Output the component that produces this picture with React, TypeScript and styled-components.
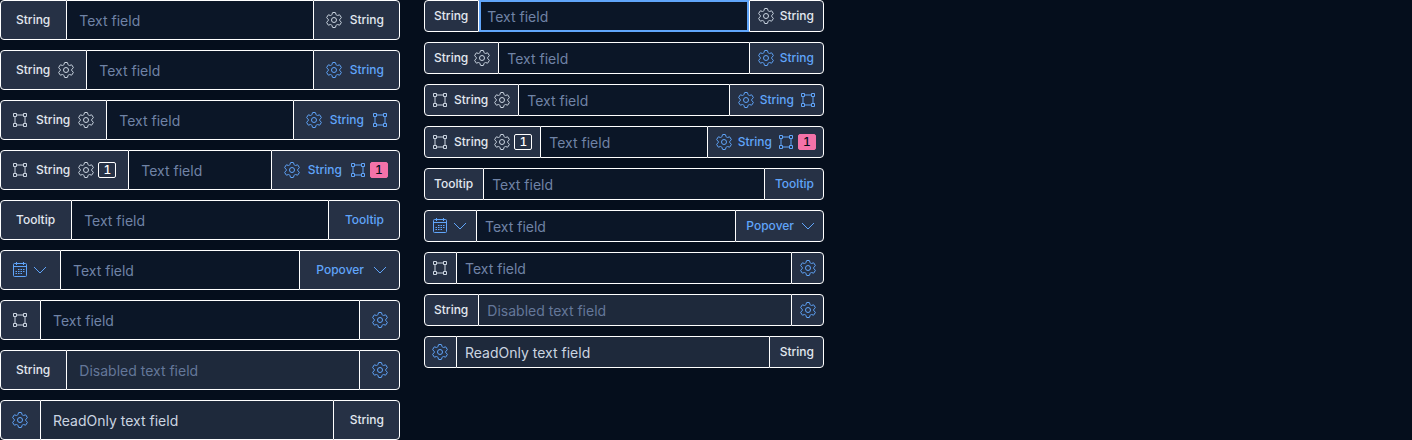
import React from 'react';
import styled, { createGlobalStyle, css } from 'styled-components';

const GlobalStyle = createGlobalStyle`
  *, *::before, *::after { box-sizing: border-box; }
  body {
    margin: 0;
    background: #050e1c;
    color: #e2e8f0;
    font-family: Inter, "Liberation Sans", sans-serif;
  }
`;

type Size = 'medium' | 'small';
type Item = 'frame' | 'gear' | 'calendar' | 'chevron' | 'badge' | { text: string };

interface AddonData {
  items: Item[];
  action?: boolean;
}

interface Field {
  before: AddonData;
  after: AddonData;
  placeholder?: string;
  value?: string;
  disabled?: boolean;
  readOnly?: boolean;
}

const Page = styled.main`
  display: grid;
  grid-template-columns: repeat(2, minmax(0, 400px));
  gap: 24px;
  align-items: start;
`;

const Column = styled.section`
  display: flex;
  flex-direction: column;
  gap: 10px;
`;

const Group = styled.div<{ $size: Size }>`
  display: flex;
  height: ${({ $size }) => ($size === 'small' ? 32 : 40)}px;
`;

const addonStyle = css<{ $size: Size; $side: 'start' | 'end' }>`
  display: flex;
  flex: none;
  align-items: center;
  gap: 4px;
  margin: 0;
  border: 1px solid #fff;
  background: #263145;
  font-family: inherit;
  font-size: 12px;
  font-weight: 500;
  line-height: 16px;
  ${({ $size, $side }) => {
    const inner = $size === 'small' ? 8 : 12;
    return $side === 'start'
      ? `padding: 0 ${inner}px 0 ${inner - 1}px; border-radius: 4px 0 0 4px;`
      : `padding: 0 ${inner - 1}px 0 ${inner}px; border-radius: 0 4px 4px 0;`;
  }}
`;

const Addon = styled.span<{ $size: Size; $side: 'start' | 'end' }>`
  ${addonStyle}
  color: #e2e8f0;
`;

const AddonButton = styled.button<{ $size: Size; $side: 'start' | 'end' }>`
  ${addonStyle}
  color: #60a5fa;
  cursor: pointer;
`;

const Label = styled.span<{ $size: Size }>`
  padding: 0 ${({ $size }) => ($size === 'small' ? 2 : 4)}px;
`;

const Badge = styled.span<{ $filled?: boolean }>`
  display: flex;
  align-items: center;
  justify-content: center;
  width: 18px;
  height: 16px;
  border: 1px solid ${({ $filled }) => ($filled ? '#f472a8' : '#fff')};
  border-radius: 2px;
  background: ${({ $filled }) => ($filled ? '#f472a8' : 'transparent')};
  color: ${({ $filled }) => ($filled ? '#050e1c' : '#fff')};
  font-variant-numeric: tabular-nums;
`;

const Input = styled.input<{ $size: Size; $focused?: boolean }>`
  flex: 1;
  min-width: 0;
  margin: 0;
  padding: 2px ${({ $size }) => ($size === 'small' ? 8 : 12)}px 0;
  border: solid #fff;
  border-width: 1px 0;
  border-radius: 0;
  background: #0b1627;
  color: #cbd5e1;
  font-family: inherit;
  font-size: 14px;
  line-height: 20px;
  outline: ${({ $focused }) => ($focused ? '2px solid #60a5fa' : 'none')};
  outline-offset: -2px;

  &::placeholder { color: #7083a6; opacity: 1; }
  &:focus { outline: 2px solid #60a5fa; }
  &:disabled, &:read-only { background: #1e293b; }
  &:disabled::placeholder { color: #647799; }
`;

const Svg = styled.svg<{ $muted?: boolean }>`
  display: block;
  flex: none;
  width: 16px;
  height: 16px;
  fill: none;
  stroke: ${({ $muted }) => ($muted ? '#cbd5e1' : 'currentColor')};
  stroke-linejoin: round;
`;

const drawings = {
  gear: (
    <>
      <path d="M6.9 .5H9.1Q9.5 .5 9.6 .9L9.9 2.3Q10.1 2.9 10.7 3.2Q11.3 3.6 11.9 3.4L13.2 2.9Q13.7 2.8 13.9 3.1L15.3 5.5Q15.5 5.9 15.1 6.2L14 7.1Q13.5 7.4 13.5 8Q13.5 8.6 14 8.9L15.1 9.8Q15.5 10.1 15.3 10.5L13.9 12.9Q13.7 13.2 13.2 13.1L11.9 12.6Q11.3 12.4 10.7 12.8Q10.1 13.1 9.9 13.7L9.6 15.1Q9.5 15.5 9.1 15.5H6.9Q6.5 15.5 6.4 15.1L6.1 13.7Q5.9 13.1 5.3 12.8Q4.7 12.4 4.1 12.6L2.8 13.1Q2.3 13.2 2.1 12.9L.7 10.5Q.5 10.1 .9 9.8L2 8.9Q2.5 8.6 2.5 8Q2.5 7.4 2 7.1L.9 6.2Q.5 5.9 .7 5.5L2.1 3.1Q2.3 2.8 2.8 2.9L4.1 3.4Q4.7 3.6 5.3 3.2Q5.9 2.9 6.1 2.3L6.4 .9Q6.5 .5 6.9 .5Z" />
      <circle cx="8" cy="8" r="2.5" />
    </>
  ),
  frame: (
    <>
      <path d="M5 3H11M5 13H11M3 5V11M13 5V11" />
      <path d="M1.5 1.5h3v3h-3zM11.5 1.5h3v3h-3zM1.5 11.5h3v3h-3zM11.5 11.5h3v3h-3z" />
    </>
  ),
  calendar: (
    <>
      <rect x="1.5" y="1.5" width="13" height="13" rx="1" />
      <path d="M2 4.5H14M4.5 0V3M11.5 0V3" />
      <path d="M6 7.5H13M3.5 9.5H13M3.5 11.5H11" strokeDasharray="1.5 1" />
    </>
  ),
  chevron: <path d="M2 5L8 11L14 5" />,
};

function Content({ addon, size }: { addon: AddonData; size: Size }) {
  return (
    <>
      {addon.items.map((item, i) => {
        if (typeof item === 'object') return <Label key={i} $size={size}>{item.text}</Label>;
        if (item === 'badge') return <Badge key={i} $filled={addon.action}>1</Badge>;
        return (
          <Svg key={i} viewBox="0 0 16 16" aria-hidden="true" $muted={!addon.action}>
            {drawings[item]}
          </Svg>
        );
      })}
    </>
  );
}

function Side({ addon, size, side }: { addon: AddonData; size: Size; side: 'start' | 'end' }) {
  const content = <Content addon={addon} size={size} />;
  return addon.action ? (
    <AddonButton type="button" $size={size} $side={side} aria-label={addon.items.some((i) => typeof i === 'object') ? undefined : 'Options'}>
      {content}
    </AddonButton>
  ) : (
    <Addon $size={size} $side={side}>{content}</Addon>
  );
}

const string: Item = { text: 'String' };
const tooltip: Item = { text: 'Tooltip' };

const fields: Field[] = [
  { before: { items: [string] }, after: { items: ['gear', string] } },
  { before: { items: [string, 'gear'] }, after: { items: ['gear', string], action: true } },
  { before: { items: ['frame', string, 'gear'] }, after: { items: ['gear', string, 'frame'], action: true } },
  { before: { items: ['frame', string, 'gear', 'badge'] }, after: { items: ['gear', string, 'frame', 'badge'], action: true } },
  { before: { items: [tooltip] }, after: { items: [tooltip], action: true } },
  { before: { items: ['calendar', 'chevron'], action: true }, after: { items: [{ text: 'Popover' }, 'chevron'], action: true } },
  { before: { items: ['frame'] }, after: { items: ['gear'], action: true } },
  { before: { items: [string] }, after: { items: ['gear'], action: true }, placeholder: 'Disabled text field', disabled: true },
  { before: { items: ['gear'], action: true }, after: { items: [string] }, value: 'ReadOnly text field', readOnly: true },
];

function FieldList({ size, focusedIndex }: { size: Size; focusedIndex?: number }) {
  return (
    <Column>
      {fields.map((field, i) => (
        <Group key={i} $size={size}>
          <Side addon={field.before} size={size} side="start" />
          <Input
            type="text"
            $size={size}
            $focused={i === focusedIndex}
            aria-label={field.value ?? field.placeholder ?? 'Text field'}
            placeholder={field.placeholder ?? 'Text field'}
            defaultValue={field.value}
            disabled={field.disabled}
            readOnly={field.readOnly}
          />
          <Side addon={field.after} size={size} side="end" />
        </Group>
      ))}
    </Column>
  );
}

export default function App() {
  return (
    <>
      <GlobalStyle />
      <Page>
        <FieldList size="medium" />
        <FieldList size="small" focusedIndex={0} />
      </Page>
    </>
  );
}
